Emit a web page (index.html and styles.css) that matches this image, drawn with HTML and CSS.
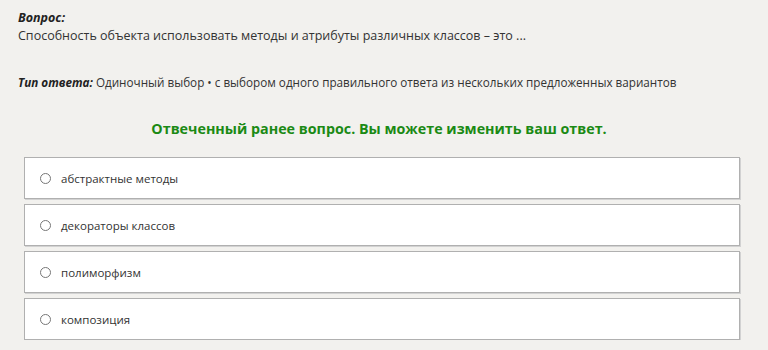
FILE: index.html
```html
<!DOCTYPE html>
<html lang="ru">
<head>
    <meta charset="UTF-8">
    <meta name="viewport" content="width=device-width, initial-scale=1.0">
    <title>Вопрос</title>
    <link rel="stylesheet" href="styles.css">
</head>
<body>
    <div class="question">
        <div class="label">Вопрос:</div>
        <div class="text">Способность объекта использовать методы и атрибуты различных классов – это ...</div>
    </div>

    <div class="answer-type">
        <span class="label">Тип ответа:</span> Одиночный выбор • с выбором одного правильного ответа из нескольких предложенных вариантов
    </div>

    <h2 class="notice">Отвеченный ранее вопрос. Вы можете изменить ваш ответ.</h2>

    <div class="options">
        <label class="option"><input type="radio" name="answer"> абстрактные методы</label>
        <label class="option"><input type="radio" name="answer"> декораторы классов</label>
        <label class="option"><input type="radio" name="answer"> полиморфизм</label>
        <label class="option"><input type="radio" name="answer"> композиция</label>
    </div>
</body>
</html>
```

FILE: styles.css
```css
body {
    margin: 0;
    padding: 9px 28px 0 18px;
    background-color: #f2f1ee;
    font-family: "Open Sans", "Noto Sans", sans-serif;
    font-size: 12.5px;
    color: #333;
}
.label {
    font-weight: bold;
    font-style: italic;
    color: #222;
}
.question .label {
    line-height: 18px;
}
.question .text {
    line-height: 18px;
}
.answer-type {
    margin-top: 28px;
    line-height: 18px;
    font-size: 11.7px;
    white-space: nowrap;
}
.notice {
    margin: 28px 0 18px;
    text-align: center;
    font-size: 14.3px;
    font-weight: bold;
    color: #1b8a14;
    line-height: 20px;
}
.options {
    margin-left: 6px;
    display: flex;
    flex-direction: column;
    gap: 5px;
}
.option {
    display: flex;
    align-items: center;
    height: 40px;
    padding-left: 15px;
    background-color: #fff;
    border: 1px solid #b0b0b0;
    box-shadow: 1px 1px 0 #d2d2d2;
    font-size: 11.5px;
    color: #333;
}
.option input {
    margin: 0 10px 0 0;
    width: 11px;
    height: 11px;
}
```
